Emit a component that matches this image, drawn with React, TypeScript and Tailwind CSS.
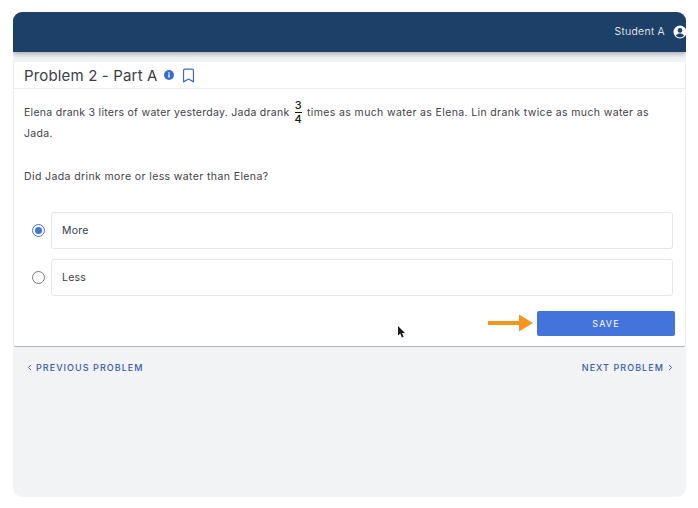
import { ChevronLeft, ChevronRight, Bookmark } from "lucide-react";

function Option({ label, selected }: { label: string; selected?: boolean }) {
  return (
    <div className="flex items-center">
      <div className="w-[37px] pl-[18px] shrink-0 flex items-center">
        <div className={`w-[13px] h-[13px] rounded-full border-[1.5px] flex items-center justify-center ${selected ? "border-[#3f74d8]" : "border-[#777b80]"}`}>
          {selected && <div className="w-[7px] h-[7px] rounded-full bg-[#3f74d8]" />}
        </div>
      </div>
      <div className="flex-1 h-[37px] border border-[#e6e7e9] rounded-[3px] pl-[10px] flex items-center text-[10.5px] tracking-[0.2px] text-[#3a3d42]">
        {label}
      </div>
    </div>
  );
}

export default function App() {
  return (
    <div className="w-[698px] h-[508px] bg-white pt-[12px] pl-[13px] pr-[12px] pb-[11px] overflow-hidden font-['Inter','Liberation_Sans',sans-serif]">
      <div className="h-full rounded-[9px] overflow-hidden bg-[#f1f3f5] flex flex-col">
        <div className="h-[40px] shrink-0 bg-[#1d4068] shadow-[0_2px_5px_rgba(0,0,0,0.3)] flex items-center justify-end text-white relative z-10">
          <span className="text-[10.5px] font-light tracking-[0.3px] mr-[8px] -mt-[1px]">Student A</span>
          <svg width="14" height="14" viewBox="0 0 14 14" className="shrink-0 -mr-[1px] -mt-[1px]">
            <circle cx="7" cy="7" r="6.500" fill="#fff" />
            <circle cx="7" cy="5.400" r="2.300" fill="#1d4068" />
            <path d="M2.900 10.600c1-1.600 2.400-2.200 4.100-2.200s3.100.6 4.100 2.200c-1 1.200-2.500 1.900-4.100 1.900s-3.100-.7-4.100-1.900z" fill="#1d4068" />
          </svg>
        </div>
        <div className="mt-[10px] h-[285px] shrink-0 bg-white border-x border-b border-x-[#eceef0] border-b-[#b4b6b9] rounded-b-[3px] flex flex-col">
          <div className="h-[27px] shrink-0 border-b border-[#eceef0] pl-[10px] flex items-center">
            <span className="text-[15px] tracking-[0.16px] text-[#3b3e44] leading-none">Problem 2 - Part A</span>
            <svg width="10" height="10" viewBox="0 0 10 10" className="ml-[6px]">
              <circle cx="5" cy="5" r="5" fill="#3a6ccf" />
              <rect x="4.300" y="4.300" width="1.400" height="3.200" fill="#fff" />
              <rect x="4.300" y="2.300" width="1.400" height="1.300" fill="#fff" />
            </svg>
            <Bookmark size={17} strokeWidth={1.700} className="ml-[6px] text-[#3a6ccf]" />
          </div>
          <div className="pl-[10px] pr-[20px] pt-[13px] text-[10.500px] leading-[21px] tracking-[0.32px] text-[#3f4247]">
            <div className="h-[21px] flex items-center whitespace-nowrap">
              <span className="tracking-[0.28px]">Elena drank 3 liters of water yesterday. Jada drank</span>
              <span className="inline-flex flex-col items-center mx-[5px] text-[11px] font-medium leading-[13px] text-[#1a1a1a]">
                <span>3</span>
                <span className="w-[7px] h-px bg-[#1a1a1a]" />
                <span>4</span>
              </span>
              <span className="tracking-[0.37px]">times as much water as Elena. Lin drank twice as much water as</span>
            </div>
            <div>Jada.</div>
            <div className="mt-[22px] tracking-[0.39px]">Did Jada drink more or less water than Elena?</div>
          </div>
          <div className="mt-[25px] pr-[12px] flex flex-col gap-[10px]">
            <Option label="More" selected />
            <Option label="Less" />
          </div>
          <div className="mt-[15px] pr-[10px] flex items-center justify-end">
            <svg width="46" height="18" viewBox="0 0 46 18" className="mr-[3px] shrink-0 -mt-[2px]">
              <rect x="0" y="7" width="31" height="4" fill="#f6961e" />
              <path d="M31 0.500L45 9L31 17.500z" fill="#f6961e" />
            </svg>
            <button className="w-[138px] h-[25px] rounded-[2px] bg-[#4274dc] text-white text-[9px] tracking-[1.100px] flex items-center justify-center">
              SAVE
            </button>
          </div>
        </div>
        <div className="pt-[14px] pl-[12px] pr-[11px] flex justify-between text-[9px] font-medium tracking-[1.050px] text-[#3c5bab]">
          <div className="flex items-center">
            <ChevronLeft size={9} strokeWidth={2.500} className="mr-[2px]" />
            <span>PREVIOUS PROBLEM</span>
          </div>
          <div className="flex items-center">
            <span>NEXT PROBLEM</span>
            <ChevronRight size={9} strokeWidth={2.500} className="ml-[2px]" />
          </div>
        </div>
      </div>
      <svg width="10" height="14" viewBox="0 0 10 14" className="absolute left-[397px] top-[325px]">
        <path d="M1 1L1 10.500L3.300 8.600L4.800 12.500L6.600 11.800L5 8L8 8z" fill="#1a1a1a" />
      </svg>
    </div>
  );
}
